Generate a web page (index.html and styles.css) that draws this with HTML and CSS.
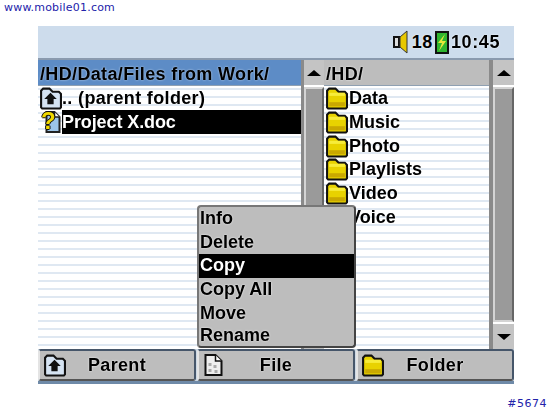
FILE: index.html
```html
<!DOCTYPE html>
<html lang="en">
<head>
    <meta charset="UTF-8">
    <title>File browser</title>
    <link rel="stylesheet" href="styles.css">
</head>
<body>
    <svg class="defs" width="0" height="0">
        <symbol id="folder" viewBox="0 0 22 22">
            <path d="M2 20V4l2-2h6l3 3h6l2 2v13l-1 1H3z" fill="#e8d200" stroke="#111" stroke-width="2"/>
            <path d="M4 6h15v3H4z" fill="#f7ec3a"/>
            <path d="M4 15h15v4H4z" fill="#c9a800"/>
        </symbol>
        <symbol id="parent" viewBox="0 0 22 22">
            <path d="M2 20V4l2-2h6l3 3h6l2 2v13l-1 1H3z" fill="#d5e3f2" stroke="#111" stroke-width="2"/>
            <path d="M11 6l6 6h-3v5H8v-5H5z" fill="#111"/>
        </symbol>
        <symbol id="doc" viewBox="0 0 22 24">
            <path d="M3 2h10l6 6v14H3z" fill="#eee" stroke="#111" stroke-width="2"/>
            <path d="M13 2v6h6" fill="#fff" stroke="#111" stroke-width="1.5"/>
            <path d="M6 10h3v3H6zM11 12h3v3h-3zM6 16h3v3H6zM12 17h3v3h-3z" fill="#aaa"/>
        </symbol>
        <symbol id="doc-unknown" viewBox="0 0 22 24">
            <path d="M7 2h8l5 5v15H7z" fill="#9cc4e8" stroke="#222" stroke-width="2"/>
            <path d="M15 2v5h5" fill="#fff" stroke="#222" stroke-width="1.5"/>
        </symbol>
    </svg>

    <div class="site">www.mobile01.com</div>

    <div class="screen">
        <div class="status">
            <svg class="speaker" width="17" height="24" viewBox="0 0 17 24">
                <path d="M1 7h5v10H1z" fill="#ddd" stroke="#111" stroke-width="2"/>
                <path d="M7 7l7-6v22l-7-6z" fill="#e8c800" stroke="#333"/>
            </svg>
            <span>18</span>
            <svg class="battery" width="14" height="24" viewBox="0 0 14 24">
                <path d="M1 2h12v21H1z" fill="#2fb52f" stroke="#111" stroke-width="2"/>
                <path d="M10 4L3 13h4l-3 8 7-10H7z" fill="#e8e83a"/>
            </svg>
            <span>10:45</span>
        </div>

        <div class="panes">
            <div class="pane pane-left">
                <div class="list">
                    <div class="path path-active">/HD/Data/Files from Work/</div>
                    <div class="row">
                        <svg class="icon"><use href="#parent"/></svg>
                        <span class="name">.. (parent folder)</span>
                    </div>
                    <div class="row">
                        <span class="doc-icon">
                            <svg class="icon"><use href="#doc-unknown"/></svg>
                            <b class="unknown">?</b>
                        </span>
                        <span class="name selected">Project X.doc</span>
                    </div>
                </div>
                <div class="scrollbar">
                    <div class="arrow"><i class="tri-up"></i></div>
                    <div class="track"></div>
                    <div class="arrow"><i class="tri-down"></i></div>
                </div>
            </div>
            <div class="pane pane-right">
                <div class="list">
                    <div class="path">/HD/</div>
                    <div class="row"><svg class="icon"><use href="#folder"/></svg><span class="name">Data</span></div>
                    <div class="row"><svg class="icon"><use href="#folder"/></svg><span class="name">Music</span></div>
                    <div class="row"><svg class="icon"><use href="#folder"/></svg><span class="name">Photo</span></div>
                    <div class="row"><svg class="icon"><use href="#folder"/></svg><span class="name">Playlists</span></div>
                    <div class="row"><svg class="icon"><use href="#folder"/></svg><span class="name">Video</span></div>
                    <div class="row"><svg class="icon"><use href="#folder"/></svg><span class="name">Voice</span></div>
                </div>
                <div class="scrollbar">
                    <div class="arrow"><i class="tri-up"></i></div>
                    <div class="track"></div>
                    <div class="arrow"><i class="tri-down"></i></div>
                </div>
            </div>

            <div class="menu">
                <div class="menu-item">Info</div>
                <div class="menu-item">Delete</div>
                <div class="menu-item menu-active">Copy</div>
                <div class="menu-item">Copy All</div>
                <div class="menu-item">Move</div>
                <div class="menu-item">Rename</div>
            </div>
        </div>

        <div class="buttons">
            <div class="btn"><svg class="icon"><use href="#parent"/></svg><span>Parent</span></div>
            <div class="btn"><svg class="icon"><use href="#doc"/></svg><span>File</span></div>
            <div class="btn"><svg class="icon"><use href="#folder"/></svg><span>Folder</span></div>
        </div>
    </div>

    <div class="ref">#5674</div>
</body>
</html>
```

FILE: styles.css
```css
body {
    margin: 0;
    width: 550px;
    height: 413px;
    overflow: hidden;
    background: #fff;
    font-family: "Liberation Sans", Arial, sans-serif;
    color: #000;
}

.defs {
    display: block;
    height: 0;
}

.site {
    height: 26px;
    padding: 1px 0 0 4px;
    box-sizing: border-box;
    font-family: "DejaVu Sans", sans-serif;
    font-size: 11px;
    line-height: 14px;
    letter-spacing: 0.2px;
    color: #2222aa;
}

.screen {
    width: 476px;
    height: 358px;
    margin-left: 38px;
    display: flex;
    flex-direction: column;
    font-size: 18px;
    font-weight: bold;
    letter-spacing: 0.35px;
    filter: blur(0.35px);
}

.status {
    height: 34px;
    flex: none;
    padding-right: 14px;
    display: flex;
    justify-content: flex-end;
    align-items: center;
    gap: 2px;
    background: #cddcec;
    border-bottom: 2px solid #8a9aae;
    box-sizing: border-box;
    text-shadow: 0 0 2px #fff;
}

.status span {
    letter-spacing: 0.6px;
}

.panes {
    position: relative;
    height: 289px;
    flex: none;
    display: flex;
    background: #8a8a8a;
}

.pane {
    display: flex;
}

.pane-left {
    width: 286px;
}

.pane-right {
    flex: 1;
}

.list {
    flex: 1;
    background: repeating-linear-gradient(to bottom, #fff 0, #fff 4px, #dfe8f2 4px, #dfe8f2 6px, #fff 6px, #fff 8px);
    overflow: hidden;
}

.path {
    height: 25px;
    padding-left: 2px;
    line-height: 28px;
    white-space: nowrap;
    overflow: hidden;
    background: #bdbdbd;
    border-bottom: 1px solid #8fa0b2;
    text-shadow: 0 0 2px #fff;
}

.path-active {
    background: #5d8cc6;
    text-shadow: 0 0 2px #cfe0f5;
}

.row {
    height: 23.8px;
    display: flex;
    align-items: center;
    padding-left: 1px;
}

.pane-right .row {
    padding-left: 1px;
    letter-spacing: 0;
}

.pane-right .icon {
    margin-right: 1px;
}

.icon {
    width: 23px;
    height: 24px;
    flex: none;
}

.name {
    line-height: 24px;
    text-shadow: 0 0 2px #fff;
}

.selected {
    flex: 1;
    letter-spacing: -0.1px;
    color: #fff;
    background: #000;
    text-shadow: none;
}

.doc-icon {
    position: relative;
    display: flex;
}

.unknown {
    position: absolute;
    left: 2px;
    top: -2px;
    font-size: 24px;
    line-height: 26px;
    color: #f0d800;
    text-shadow: 1px 0 0 #111, -1px 0 0 #111, 0 1px 0 #111, 0 -1px 0 #111;
}

.scrollbar {
    width: 20px;
    flex: none;
    display: flex;
    flex-direction: column;
    gap: 2px;
    margin-left: 3px;
    background: #fff;
}

.pane-right .scrollbar {
    width: 21px;
    margin-left: 4px;
}

.arrow {
    height: 25px;
    flex: none;
    display: flex;
    align-items: center;
    justify-content: center;
    background: #c4c4c4;
}

.track {
    flex: 1;
    background: #9a9a9a;
    border: 2px solid #d4d4d4;
    border-right-color: #666;
}

.tri-up {
    border: 7px solid transparent;
    border-top: 0;
    border-bottom: 6px solid #000;
}

.tri-down {
    border: 7px solid transparent;
    border-bottom: 0;
    border-top: 6px solid #000;
}

.menu {
    position: absolute;
    left: 159px;
    top: 145px;
    width: 159px;
    height: 143px;
    box-sizing: border-box;
    overflow: hidden;
    letter-spacing: 0;
    background: #bdbdbd;
    border: 2px solid #444;
    border-top-color: #777;
    border-left-color: #777;
    border-radius: 4px;
}

.menu-item {
    height: 23.7px;
    padding-left: 1px;
    line-height: 23px;
    text-shadow: 0 0 2px #fff;
}

.menu-item:last-child {
    height: 21px;
    line-height: 21px;
}

.menu-active {
    color: #fff;
    background: #000;
    text-shadow: none;
}

.buttons {
    flex: 1;
    display: flex;
    gap: 1px;
    background: #ccd8e4;
    border-bottom: 3px solid #6f8aa8;
}

.btn {
    flex: 1;
    display: flex;
    align-items: center;
    padding-left: 3px;
    background: #bdbdbd;
    border: 2px solid #46566a;
    border-left-color: #e4e4e4;
    border-bottom-color: #555;
    border-radius: 3px;
    box-sizing: border-box;
    text-shadow: 0 0 2px #fff;
}

.btn span {
    flex: 1;
    text-align: center;
    padding-right: 26px;
}

.ref {
    margin-top: 13px;
    padding-right: 3px;
    text-align: right;
    font-family: "DejaVu Sans", sans-serif;
    font-size: 11px;
    line-height: 14px;
    letter-spacing: 0.5px;
    color: #2222aa;
}
```
